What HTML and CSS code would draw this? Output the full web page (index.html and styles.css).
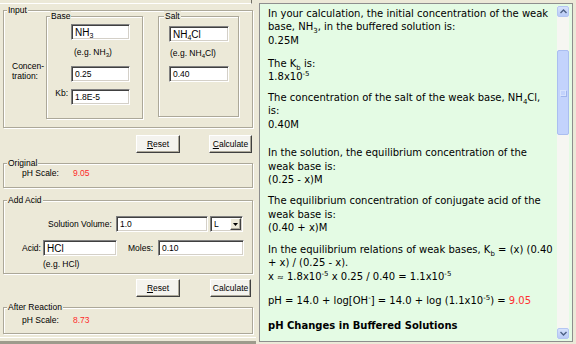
FILE: index.html
```html
<!DOCTYPE html>
<html>
<head>
<meta charset="utf-8">
<link rel="stylesheet" href="styles.css">
</head>
<body>
<div class="app">
  <div class="left">
    <div class="topstrip"></div>

    <div class="group g-input">
      <span class="cap">Input</span>
      <div class="conc">Concen-<br>tration:</div>
      <div class="group g-base">
        <span class="cap">Base</span>
        <div class="field rich c2 f-nh3">NH<sub>3</sub></div>
        <div class="eg c2 eg-base">(e.g. NH<sub>3</sub>)</div>
        <div class="field c2 f-conc">0.25</div>
        <div class="kb">Kb:</div>
        <div class="field f-kb">1.8E-5</div>
      </div>
      <div class="group g-salt">
        <span class="cap cap-salt">Salt</span>
        <div class="field rich f-salt">NH<sub>4</sub>Cl</div>
        <div class="eg eg-salt">(e.g. NH<sub>4</sub>Cl)</div>
        <div class="field f-salt2">0.40</div>
      </div>
    </div>

    <div class="btnrow">
      <div class="btn b-reset"><u>R</u>eset</div>
      <div class="btn b-calc"><u>C</u>alculate</div>
    </div>

    <div class="group g-orig">
      <span class="cap">Original</span>
      <div class="phrow"><span class="phlabel">pH Scale:</span><span class="red">9.05</span></div>
    </div>

    <div class="group g-acid">
      <span class="cap">Add Acid</span>
      <div class="solrow">
        <span class="sollabel">Solution Volume:</span>
        <div class="field f-vol">1.0</div>
        <div class="field select"><span>L</span><span class="arrow"><svg width="5" height="3" viewBox="0 0 5 3"><path d="M0 0H5L2.5 3Z" fill="#000"/></svg></span></div>
      </div>
      <div class="acidrow">
        <span class="acidlabel">Acid:</span>
        <div class="field rich f-acid">HCl</div>
        <span class="moleslabel">Moles:</span>
        <div class="field f-moles">0.10</div>
      </div>
      <div class="eg eg-acid">(e.g. HCl)</div>
    </div>

    <div class="btnrow btnrow2">
      <div class="btn b-reset"><u>R</u>eset</div>
      <div class="btn b-calc2">Calculate</div>
    </div>

    <div class="group g-after">
      <span class="cap">After Reaction</span>
      <div class="phrow phrow2"><span class="phlabel">pH Scale:</span><span class="red">8.73</span></div>
    </div>

    <div class="foot"></div>
  </div>

  <div class="right">
    <div class="text">
      <p>In your calculation, the initial concentration of the weak<br>base, NH<sub>3</sub>, in the buffered solution is:<br>0.25M</p>
      <p class="p2">The K<sub>b</sub> is:<br>1.8x10<sup>-5</sup></p>
      <p class="p3">The concentration of the salt of the weak base, NH<sub>4</sub>Cl,<br>is:<br>0.40M</p>
      <p class="p4">In the solution, the equilibrium concentration of the<br>weak base is:<br>(0.25 - x)M</p>
      <p class="p5">The equilibrium concentration of conjugate acid of the<br>weak base is:<br>(0.40 + x)M</p>
      <p class="p6">In the equilibrium relations of weak bases, K<sub>b</sub> = (x) (0.40<br>+ x) / (0.25 - x).<br>x <span class="approx">≈</span> 1.8x10<sup>-5</sup> x 0.25 / 0.40 = 1.1x10<sup>-5</sup></p>
      <p class="p7">pH = 14.0 + log[OH<sup>-</sup>] = 14.0 + log (1.1x10<sup>-5</sup>) = <span class="red2">9.05</span></p>
      <p class="p8"><b>pH Changes in Buffered Solutions</b></p>
    </div>
    <div class="scroll">
      <div class="sbtn"><svg width="7" height="5" viewBox="0 0 7 5"><path d="M0.5 4L3.5 1L6.5 4" fill="none" stroke="#4D6185" stroke-width="1.4"/></svg></div>
      <div class="thumb"><span class="grip"></span></div>
      <div class="sbtn sbtn-down"><svg width="7" height="5" viewBox="0 0 7 5"><path d="M0.5 1L3.5 4L6.5 1" fill="none" stroke="#4D6185" stroke-width="1.4"/></svg></div>
    </div>
  </div>
</div>
</body>
</html>
```

FILE: styles.css
```css
* { box-sizing: border-box; margin: 0; padding: 0; }
html, body { width: 576px; height: 344px; overflow: hidden; }
body {
  background: #ECE9D8;
  font-family: "Liberation Sans", Arial, sans-serif;
  font-size: 8.5px;
  line-height: 9px;
  color: #000;
}
.app { display: flex; height: 344px; }

/* ---------- left dialog ---------- */
.left { width: 256px; display: flex; flex-direction: column; }
.topstrip {
  height: 4px; width: 252px;
  border-bottom: 1px solid #fff;
  border-right: 1px solid #716F64;
}
.group {
  position: relative;
  border: 1px solid #ACA899;
  box-shadow: inset 1px 1px 0 #fff, 1px 1px 0 #fff;
}
.cap {
  position: absolute;
  top: -6px; left: 3px;
  padding: 0 1px;
  background: #ECE9D8;
  line-height: 10px;
  white-space: nowrap;
}
.cap-salt { left: 5px; }

.g-input {
  margin: 6px 0 0 3px;
  width: 250px; height: 118px;
  display: flex; align-items: flex-start;
  padding-top: 5px;
}
.conc { width: 42px; padding: 46px 0 0 8px; line-height: 9.5px; white-space: nowrap; }

.g-base {
  width: 97px; height: 103px;
  display: grid;
  grid-template-columns: 24px 59px;
  align-content: start;
  padding-top: 7px;
}
.c2 { grid-column: 2; }
.kb { grid-column: 1; text-align: right; padding-right: 3px; align-self: center; }
.f-conc { margin-top: 9px; }
.f-kb { grid-column: 2; margin-top: 7px; }
.eg-base { margin: 8px 0 0 3px; }

.g-salt {
  margin-left: 15px;
  width: 81px; height: 101px;
  padding: 9px 0 0 10px;
}
.f-salt { width: 60px; }
.eg-salt { margin: 7px 0 0 1px; }
.f-salt2 { width: 60px; margin-top: 8px; }

.eg { white-space: nowrap; height: 9px; }
sub { font-size: 6px; line-height: 0; vertical-align: -2px; }

.field {
  height: 16px;
  background: #fff;
  border: 1px solid;
  border-color: #808080 #fff #fff #808080;
  box-shadow: inset 1px 1px 0 #404040, inset -1px -1px 0 #D4D0C8;
  padding: 3px 0 0 3px;
  white-space: nowrap;
}
.field.rich { font-size: 10px; line-height: 10px; padding-top: 3px; }
.field.rich sub { font-size: 7px; vertical-align: -2px; }

/* buttons */
.btnrow { display: flex; margin: 7px 0 0 136px; gap: 29px; }
.btnrow2 { margin-top: 5px; gap: 30px; }
.btn {
  height: 18px;
  display: flex; align-items: center; justify-content: center;
  background: #F4F3EE;
  border: 1px solid;
  border-color: #fff #404040 #404040 #fff;
  box-shadow: inset -1px -1px 0 #ACA899;
  white-space: nowrap;
}
.b-reset { width: 44px; }
.b-calc { width: 43px; }
.b-calc2 { width: 41px; }

/* original / after */
.g-orig { margin: 10px 0 0 3px; width: 250px; height: 25px; }
.phrow { display: flex; padding: 5px 0 0 18px; }
.phlabel { width: 51px; }
.red { color: #FF2A2A; }
.g-after { margin: 10px 0 0 3px; width: 250px; height: 27px; }
.phrow2 { padding-top: 8px; }

/* add acid */
.g-acid { margin: 12px 0 0 3px; width: 250px; height: 74px; }
.solrow { display: flex; align-items: center; margin-top: 15px; padding-left: 44px; }
.sollabel { width: 68px; white-space: nowrap; }
.f-vol { width: 92px; }
.select {
  width: 33px; margin-left: 2px;
  display: flex; justify-content: space-between;
  padding: 1px 1px 1px 3px;
}
.select span:first-child { padding-top: 2px; }
.arrow {
  width: 11px; height: 12px;
  background: #ECE9D8;
  border: 1px solid;
  border-color: #fff #404040 #404040 #fff;
  box-shadow: inset -1px -1px 0 #ACA899;
  display: flex; align-items: center; justify-content: center;
}
.acidrow { display: flex; align-items: center; margin-top: 8px; padding-left: 18px; }
.acidlabel { width: 21px; }
.f-acid { width: 74px; }
.moleslabel { width: 30px; margin-left: 11px; }
.f-moles { width: 86px; }
.eg-acid { margin: 4px 0 0 39px; }

.foot {
  margin-top: auto;
  height: 7px;
  border-top: 1px solid #fff;
  border-bottom: 3px solid #9D9B8C;
}

/* ---------- right text panel ---------- */
.right {
  margin: 3px 0 0 3px;
  width: 314px; height: 339px;
  border: 1px solid #8E8E8E;
  background: #E4FBE4;
  display: flex;
}
.text {
  flex: 1;
  padding: 2.5px 0 0 8px;
  font-family: "DejaVu Sans", Verdana, sans-serif;
  font-size: 10px;
  line-height: 13.5px;
  white-space: nowrap;
  overflow: hidden;
}
.text sub { font-size: 7px; vertical-align: -3px; line-height: 0; }
.text sup { font-size: 7px; vertical-align: 4px; line-height: 0; }
.approx { font-size: 8px; }
.p2 { margin-top: 9.5px; }
.p3 { margin-top: 7px; }
.p4 { margin-top: 15px; }
.p5 { margin-top: 7.5px; }
.p6 { margin-top: 8px; }
.p7 { margin-top: 10px; }
.p8 { margin-top: 11px; }
.red2 { color: #FF3030; }

.scroll {
  width: 12px;
  margin: 2px 3px 2px 0;
  display: flex; flex-direction: column;
  background: #F6F6F2;
}
.sbtn {
  height: 11px;
  background: linear-gradient(#D6E2FC, #B9CBF6);
  border: 1px solid #B4C6F2;
  border-radius: 2px;
  display: flex; align-items: center; justify-content: center;
}
.sbtn-down { margin-top: auto; }
.thumb {
  margin-top: 33px;
  height: 85px;
  background: #C3D3FC;
  border: 1px solid #AABEF0;
  border-radius: 2px;
  display: flex; align-items: center; justify-content: center;
}
.grip {
  width: 6px; height: 6px;
  border: 1px solid #D7E2FD;
  box-shadow: 1px 1px 0 #9FB5EC;
}
```
